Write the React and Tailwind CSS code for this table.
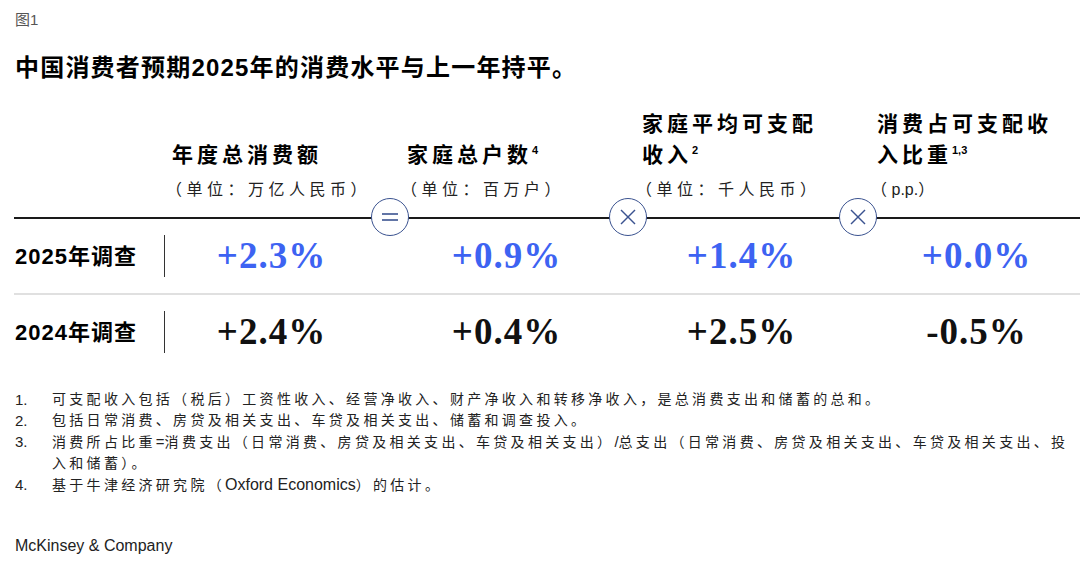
const sans = { fontFamily: '"Liberation Sans", "Noto Sans CJK SC", sans-serif' }
const serif = { fontFamily: '"Liberation Serif", "Noto Sans CJK SC", serif' }

const columns = [
  { title: ["年度总消费额"], sup: "", unit: "（单位：万亿人民币）" },
  { title: ["家庭总户数"], sup: "4", unit: "（单位：百万户）" },
  { title: ["家庭平均可支配", "收入"], sup: "2", unit: "（单位：千人民币）" },
  { title: ["消费占可支配收", "入比重"], sup: "1,3", unit: "（p.p.）" }
]

const rows = [
  { label: "2025年调查", values: ["+2.3%", "+0.9%", "+1.4%", "+0.0%"], blue: true },
  { label: "2024年调查", values: ["+2.4%", "+0.4%", "+2.5%", "-0.5%"], blue: false }
]

function Operator({ left, kind }) {
  return (
    <div
      className="absolute top-[-19px] w-[38px] h-[38px] rounded-full bg-white border-[1.5px] border-[#3b5390] flex items-center justify-center"
      style={{ left: left - 19 }}
    >
      {kind === "eq" ? (
        <svg width="18" height="10" viewBox="0 0 18 10">
          <line x1="1" y1="2" x2="17" y2="2" stroke="#3b5390" strokeWidth="1.6" />
          <line x1="1" y1="8" x2="17" y2="8" stroke="#3b5390" strokeWidth="1.6" />
        </svg>
      ) : (
        <svg width="18" height="18" viewBox="0 0 18 18">
          <line x1="2" y1="2" x2="16" y2="16" stroke="#3b5390" strokeWidth="1.4" />
          <line x1="16" y1="2" x2="2" y2="16" stroke="#3b5390" strokeWidth="1.4" />
        </svg>
      )}
    </div>
  )
}

function Note({ n, children }) {
  return (
    <div className="flex">
      <div className="w-[52px] pl-[15px] shrink-0 text-[15px]">{n}.</div>
      <div className="tracking-[3.3px]">{children}</div>
    </div>
  )
}

function App() {
  return (
    <div className="w-[1080px] h-[568px] bg-white overflow-hidden text-black" style={sans}>
      <div className="px-[15px] pt-[10px] text-[15px] leading-[20px] text-[#555]">图1</div>

      <div className="px-[15px] mt-[22px] text-[24px] leading-[32px] font-bold tracking-[1.2px]">
        中国消费者预期2025年的消费水平与上一年持平。
      </div>

      {/* header */}
      <div className="flex h-[133px] items-end pb-[15px]">
        <div className="w-[154px] shrink-0" />
        <div className="grid grid-cols-[235px_235px_235px_235px] items-end">
          {columns.map((col, i) => (
            <div key={i} className="pl-[18px]">
              {col.title.map((line, j) => (
                <div key={j} className="text-[21px] leading-[31px] font-bold tracking-[4px]">
                  {line}
                  {j === col.title.length - 1 && col.sup && (
                    <sup className="text-[11px] font-bold tracking-normal align-[3px]" style={sans}>
                      {col.sup}
                    </sup>
                  )}
                </div>
              ))}
              <div className="mt-[8px] text-[16px] leading-[24px] tracking-[4.5px] text-[#222] -ml-[6px]">
                {col.unit.includes("p.p.") ? (
                  <>
                    （<span className="tracking-normal">p.p.</span>）
                  </>
                ) : (
                  col.unit
                )}
              </div>
            </div>
          ))}
        </div>
      </div>

      {/* main rule with operators */}
      <div className="relative ml-[14px] h-[2px] bg-[#1a1a1a]">
        <Operator left={376} kind="eq" />
        <Operator left={614} kind="x" />
        <Operator left={844} kind="x" />
      </div>

      {rows.map((row, i) => (
        <div key={row.label}>
          {i > 0 && <div className="ml-[14px] h-[2px] bg-[#e0e0e0]" />}
          <div className="flex items-center h-[74px]">
            <div className="w-[164px] pl-[15px] shrink-0 text-[22px] font-bold tracking-[1px]">{row.label}</div>
            <div className="w-px h-[42px] bg-[#333] shrink-0" />
            <div className="grid grid-cols-[235px_235px_235px_235px] -ml-[11px]">
              {row.values.map((v) => (
                <div
                  key={v}
                  className={
                    "text-center text-[37px] font-bold tracking-[1px] " +
                    (row.blue ? "text-[#3d63f2]" : "text-[#111]")
                  }
                  style={serif}
                >
                  {v}
                </div>
              ))}
            </div>
          </div>
        </div>
      ))}

      {/* footnotes */}
      <div className="mt-[20px] text-[14px] leading-[21px] text-[#222]">
        <Note n="1">
          可支配收入包括（税后）工资性收入、经营净收入、财产净收入和转移净收入，是总消费支出和储蓄的总和。
        </Note>
        <Note n="2">包括日常消费、房贷及相关支出、车贷及相关支出、储蓄和调查投入。</Note>
        <Note n="3">
          消费所占比重<span className="tracking-normal text-[15px]">=</span>消费支出（日常消费、房贷及相关支出、车贷及相关支出）<span className="tracking-normal text-[15px]">/</span>总支出（日常消费、房贷及相关支出、车贷及相关支出、投
          <br />
          入和储蓄）。
        </Note>
        <Note n="4">
          基于牛津经济研究院（<span className="tracking-normal text-[16px]">Oxford Economics</span>）的估计。
        </Note>
      </div>

      <div className="px-[15px] mt-[40px] text-[16px] leading-[20px] text-[#222]">McKinsey &amp; Company</div>
    </div>
  )
}

export default App
